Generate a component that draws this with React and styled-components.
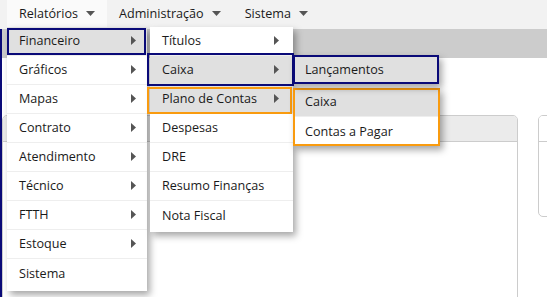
import React from 'react';
import styled, { createGlobalStyle } from 'styled-components';

const NAVY = '#0a0a78';
const ORANGE = '#f99b0f';

const GlobalStyle = createGlobalStyle`
  html, body { margin: 0; padding: 0; background: #fff; }
  body {
    font-family: "Open Sans", "DejaVu Sans", sans-serif;
    font-size: 12.6px;
    color: #1a1a1a;
  }
  * { box-sizing: border-box; }
`;

const Page = styled.div`
  position: relative;
  width: 547px;
  height: 297px;
  overflow: hidden;
  display: flex;
  flex-direction: column;
`;

const NavBar = styled.nav`
  flex-shrink: 0;
  height: 29px;
  background: #f2f2f2;
  display: flex;
  padding-left: 7px;
  position: relative;
  z-index: 10;
`;

const NavItem = styled.div`
  position: relative;
  display: flex;
  align-items: center;
  gap: 8px;
  padding: 0 12px 3px 12px;
  background: ${p => (p.$active ? '#fafafa' : 'transparent')};
`;

const Main = styled.div`
  flex: 1;
  min-height: 0;
  overflow: hidden;
  border-left: 2px solid ${NAVY};
  display: flex;
  flex-direction: column;
`;

const Band = styled.div`
  flex-shrink: 0;
  height: 29px;
  background: #ccc;
`;

const Cards = styled.div`
  display: flex;
  gap: 20px;
  padding: 57px 0 0 0;
`;

const Card = styled.div`
  flex: ${p => (p.$grow ? 1 : 'none')};
  width: ${p => (p.$width ? `${p.$width}px` : 'auto')};
  min-width: 60px;
  height: ${p => p.$height}px;
  border: 1px solid #ccc;
  border-radius: 5px;
  overflow: hidden;
  background: #fff;
`;

const CardHeader = styled.div`
  height: 26px;
  background: ${p => p.$bg};
  border-bottom: 1px solid #ccc;
`;

const Menu = styled.ul`
  position: absolute;
  top: ${p => p.$top}px;
  left: ${p => p.$left};
  width: ${p => p.$width}px;
  margin: 0;
  padding: 0 0 ${p => p.$padBottom || 0}px 0;
  list-style: none;
  background: #fff;
  box-shadow: 3px 4px 7px rgba(0, 0, 0, 0.35);
  z-index: ${p => p.$z};
  &::after {
    content: '';
    display: ${p => (p.$frame ? 'block' : 'none')};
    position: absolute;
    inset: 0;
    border: 2px solid ${p => p.$frame};
    pointer-events: none;
  }
`;

const Item = styled.li`
  position: relative;
  display: flex;
  align-items: center;
  justify-content: space-between;
  height: 29px;
  padding: 0 ${p => p.$padRight || 12}px 1px 12px;
  border-bottom: ${p => (p.$last ? 'none' : '1px solid #eee')};
  background: ${p => (p.$active ? '#e0e0e0' : '#fff')};
  white-space: nowrap;
  &::after {
    content: '';
    display: ${p => (p.$frame ? 'block' : 'none')};
    position: absolute;
    top: ${p => p.$inset?.[0] ?? 0}px;
    right: ${p => p.$inset?.[1] ?? 0}px;
    bottom: ${p => p.$inset?.[2] ?? 0}px;
    left: ${p => p.$inset?.[3] ?? 0}px;
    border: 2px solid ${p => p.$frame};
    pointer-events: none;
    z-index: 2;
  }
`;

const Down = () => (
  <svg width="9" height="5" viewBox="0 0 9 5">
    <path d="M0 0h9L4.5 5z" fill="#555" />
  </svg>
);

const Right = () => (
  <svg width="5" height="9" viewBox="0 0 5 9" style={{ position: 'relative', zIndex: 3 }}>
    <path d="M0 0l5 4.5L0 9z" fill="#555" />
  </svg>
);

const financeiro = [
  { title: 'Títulos', sub: true },
  { title: 'Caixa', sub: true, active: true, frame: NAVY, inset: [-3, -1, -2, -3] },
  { title: 'Plano de Contas', sub: true, active: true, frame: ORANGE, inset: [2, 1, -1, -3] },
  { title: 'Despesas' },
  { title: 'DRE' },
  { title: 'Resumo Finanças' },
  { title: 'Nota Fiscal' },
];

const relatorios = [
  'Financeiro', 'Gráficos', 'Mapas', 'Contrato', 'Atendimento',
  'Técnico', 'FTTH', 'Estoque', 'Sistema',
];

const FinanceiroMenu = () => (
  <Menu $top={0} $left="143px" $width={143} $padBottom={2} $z={21}>
    {financeiro.map((it, i) => (
      <Item
        key={it.title}
        $active={it.active}
        $frame={it.frame}
        $inset={it.inset}
        $padRight={14}
        $last={i === financeiro.length - 1}
      >
        {it.title}
        {it.sub && <Right />}
        {it.title === 'Caixa' && (
          <Menu $top={-1} $left="143px" $width={146} $z={23} $frame={NAVY}>
            <Item $active $last>Lançamentos</Item>
          </Menu>
        )}
        {it.title === 'Plano de Contas' && (
          <Menu $top={3} $left="143px" $width={147} $z={22} $frame={ORANGE}>
            <Item $active>Caixa</Item>
            <Item $last>Contas a Pagar</Item>
          </Menu>
        )}
      </Item>
    ))}
  </Menu>
);

export default function App() {
  return (
    <>
      <GlobalStyle />
      <Page>
        <NavBar>
          <NavItem $active>
            Relatórios <Down />
            <Menu $top={27} $left="0px" $width={140} $padBottom={3} $z={20}>
              {relatorios.map((title, i) => (
                <Item
                  key={title}
                  $active={i === 0}
                  $frame={i === 0 ? NAVY : null}
                  $inset={[1, 1, 0, 0]}
                  $padRight={11}
                  $last={i === relatorios.length - 1}
                >
                  {title}
                  {i < 8 && <Right />}
                  {i === 0 && <FinanceiroMenu />}
                </Item>
              ))}
            </Menu>
          </NavItem>
          <NavItem>
            Administração <Down />
          </NavItem>
          <NavItem>
            Sistema <Down />
          </NavItem>
        </NavBar>
        <Main>
          <Band />
          <Cards>
            <Card $width={516} $height={220}>
              <CardHeader $bg="#ebebeb" />
            </Card>
            <Card $grow $height={102}>
              <CardHeader $bg="#fff" />
            </Card>
          </Cards>
        </Main>
      </Page>
    </>
  );
}
